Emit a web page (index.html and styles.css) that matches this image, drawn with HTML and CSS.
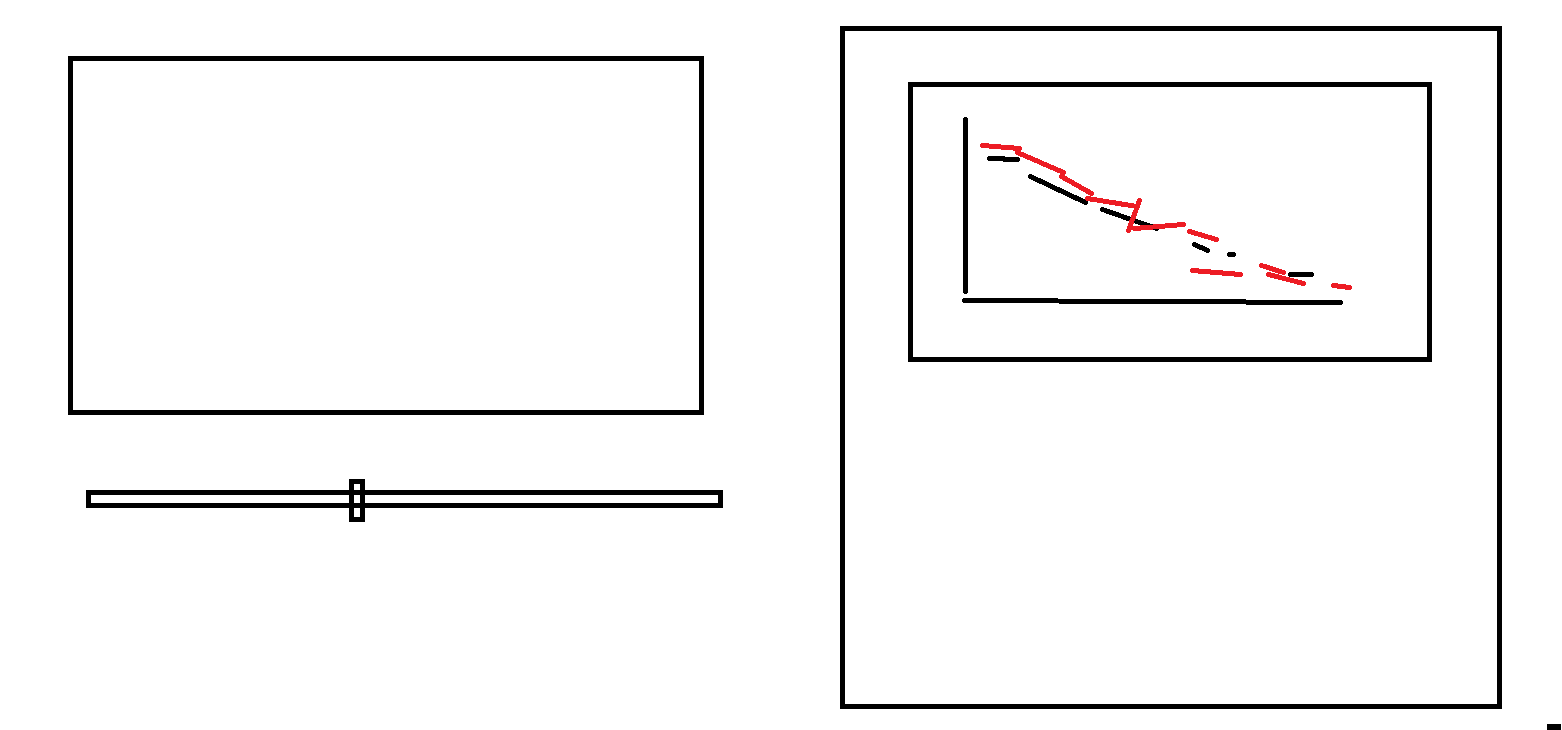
FILE: index.html
```html
<!DOCTYPE html>
<html lang="en">
<head>
<meta charset="utf-8">
<meta name="viewport" content="width=device-width, initial-scale=1">
<title>Wireframe</title>
<link rel="stylesheet" href="styles.css">
</head>
<body>
<main class="layout">
  <section class="player">
    <div class="viewer"></div>
    <input class="slider" type="range" min="0" max="611" value="258" aria-label="Position">
  </section>
  <aside class="panel">
    <figure class="chart">
      <svg class="plot" viewBox="913 87 514 270" role="img" aria-label="Line chart with two falling series">
        <g class="ink">
          <path d="M965.5 119.5V291.5"/>
          <path d="M964.5 300.5H1056.5M1060.5 301.5H1244.5M1248 302.5H1340.5"/>
          <path d="M989.5 158.5H1003.5L1005 159.5H1017.5"/>
          <path d="M1030.5 176.5L1085.5 202.5"/>
          <path d="M1102.5 209.5L1156.5 228.5"/>
          <path d="M1194.5 244.5L1207.5 250.5"/>
          <path d="M1229.5 254.5H1233.5"/>
          <path d="M1290.5 274.5H1311.5"/>
        </g>
        <g class="ink red">
          <path d="M982.5 145.5L1019.5 148.5L1017.5 152.5L1063.5 172.5L1061.5 176.5L1091.5 193.5"/>
          <path d="M1087.5 198.5L1137 206.5"/>
          <path d="M1139.5 200.5L1128.5 230.5"/>
          <path d="M1134.5 228.5L1183.5 224.5"/>
          <path d="M1189.5 231.5L1216.5 239.5"/>
          <path d="M1192.5 270.5L1240.5 274.5"/>
          <path d="M1261.5 265.5L1283.5 272.5"/>
          <path d="M1268.5 274.5L1303.5 283.5"/>
          <path d="M1333.5 285.5L1349.5 287.5"/>
        </g>
      </svg>
    </figure>
  </aside>
</main>
<footer class="footer"><span class="mark"></span></footer>
</body>
</html>
```

FILE: styles.css
```css
* {
  box-sizing: border-box;
}

body {
  margin: 0;
  min-height: 100vh;
  display: flex;
  flex-direction: column;
  background: #fff;
  font-family: "Liberation Sans", Arial, sans-serif;
}

.layout {
  flex: 1;
  display: grid;
  grid-template-columns: 655fr 662fr;
  column-gap: 117px;
  padding: 26px 60px 15px 68px;
}

.player {
  display: flex;
  flex-direction: column;
  gap: 62px;
  padding-top: 30px;
}

.viewer {
  margin-right: 19px;
  aspect-ratio: 636 / 359;
  border: 5px solid #000;
}

.slider {
  appearance: none;
  height: 43px;
  margin: 0 0 0 18px;
  background: transparent;
}

.slider::-webkit-slider-runnable-track {
  height: 18px;
  border: 5px solid #000;
}

.slider::-webkit-slider-thumb {
  appearance: none;
  box-sizing: border-box;
  width: 16px;
  height: 43px;
  margin-top: -16px;
  border: 5px solid #000;
  background: transparent;
}

.panel {
  padding: 51px 65px 51px 63px;
  border: 5px solid #000;
}

.chart {
  margin: 0;
  aspect-ratio: 524 / 280;
  border: 5px solid #000;
}

.plot {
  display: block;
  width: 100%;
  height: 100%;
}

.ink {
  fill: none;
  stroke: #000;
  stroke-width: 5;
  stroke-linecap: round;
  stroke-linejoin: round;
  shape-rendering: crispEdges;
}

.red {
  stroke: #ed1c24;
}

.footer {
  display: flex;
  justify-content: flex-end;
  padding-right: 1px;
}

.mark {
  width: 14px;
  height: 6px;
  background: #000;
}
```
